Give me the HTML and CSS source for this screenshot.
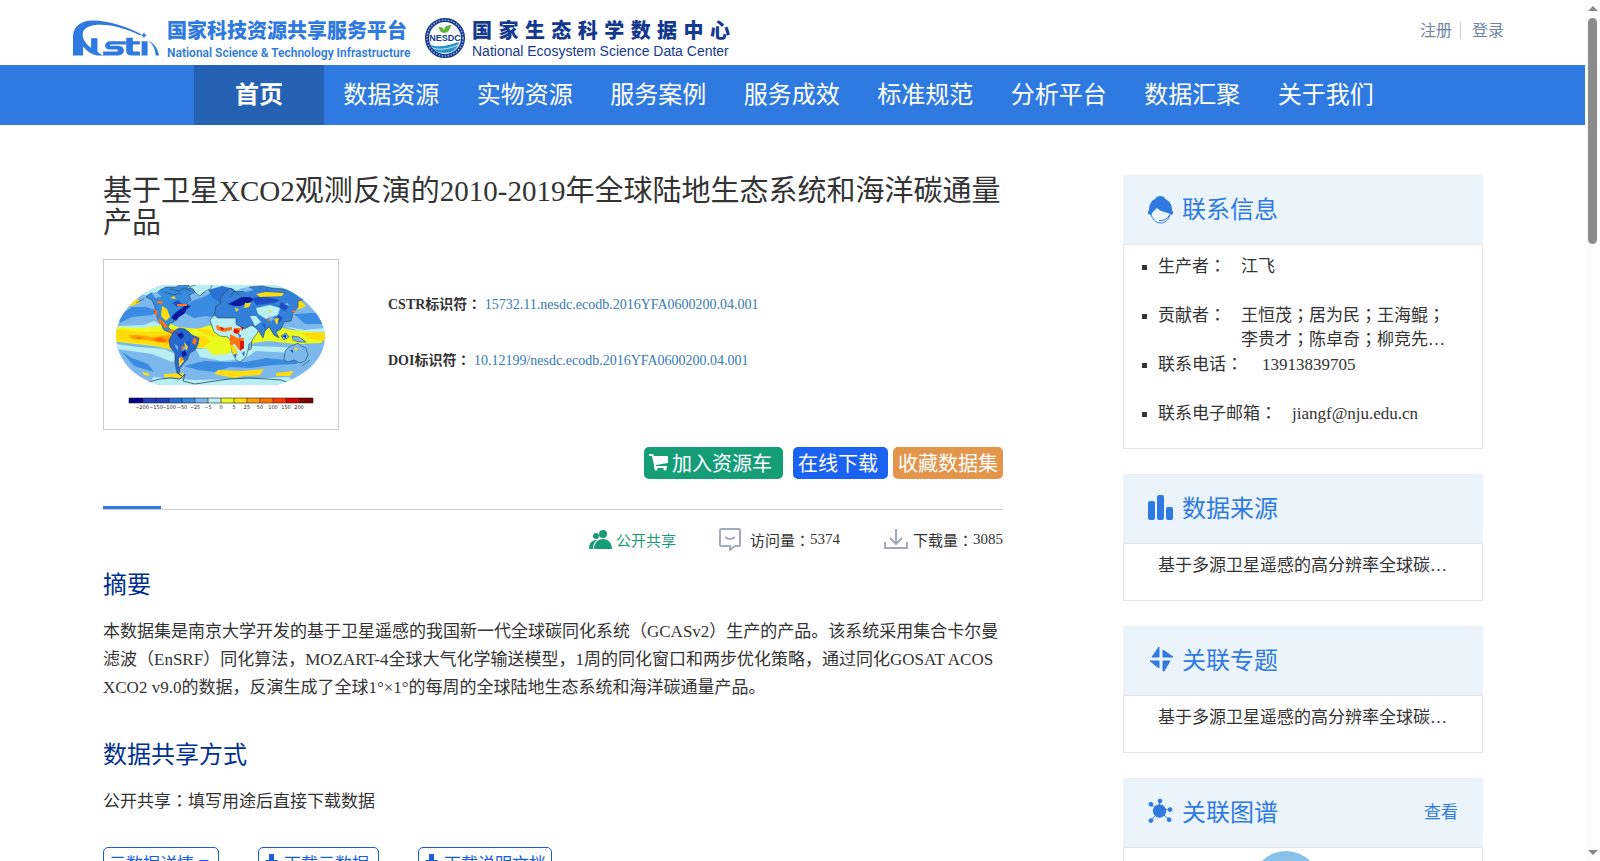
FILE: index.html
```html
<!DOCTYPE html>
<html lang="zh-CN">
<head>
<meta charset="utf-8">
<title>国家生态科学数据中心</title>
<link rel="stylesheet" href="styles.css">
</head>
<body>
<div class="page">
  <header class="top">
    <a class="brand" href="#">
      <svg class="brand-nsti" viewBox="38 60 257 105" aria-hidden="true">
        <g fill="#2f7ae0">
          <path d="M38 165V105C40 76 65 60 95 60C150 60 200 80 242 101L238 104C195 84 150 70 110 73C80 75 66 88 67 104C68 120 80 132 92 142V113H111V152C116 158 122 162 130 165H108C90 160 78 150 68 138V165Z"/>
          <path d="M196 122H150C130 122 128 146 148 147H168C174 147 174 153 168 153H128V165H172C196 165 196 138 174 136H152C146 136 147 132 152 132H196z"/>
          <path d="M197 112H217V122H238V132H217V148C217 153 220 153 224 153H238V165H218C202 165 197 160 197 148z"/>
          <path d="M243 122H261V165H243zM250 95L253 101 259 104 253 107 250 113 247 107 241 104 247 101zM262 118C280 130 292 145 295 165H285C284 145 275 130 262 118z"/>
        </g>
      </svg>
      <span class="brand-text nsti-text"><b>国家科技资源共享服务平台</b><span>National Science &amp; Technology Infrastructure</span></span>
    </a>
    <a class="brand" href="#">
      <svg class="brand-nesdc" viewBox="0 0 40 40" aria-hidden="true">
        <circle cx="20" cy="20" r="18" fill="#fff" stroke="#13398f" stroke-width="4"/>
        <circle cx="20" cy="20" r="18" fill="none" stroke="#9fb4dc" stroke-width="1.5" stroke-dasharray="1.5 1.5"/>
        <path fill="#5fb53c" d="M19 15c-3 0-5-3-5-6 3 0 5 1 5 4 0-4 3-6 7-6-1 5-3 8-7 8z"/>
        <path fill="#2795c9" d="M6 27c8 3 18 0 28-3-1 6-6 11-14 11-7 0-12-3-14-8z"/>
        <path fill="none" stroke="#cfe9f5" d="M8 30c8 3 18 0 25-3"/>
        <text x="20" y="23" text-anchor="middle" class="seal-text">NESDC</text>
      </svg>
      <span class="brand-text nesdc-text"><b><i>国</i><i>家</i><i>生</i><i>态</i><i>科</i><i>学</i><i>数</i><i>据</i><i>中</i><i>心</i></b><span>National Ecosystem Science Data Center</span></span>
    </a>
    <div class="account"><a href="#">注册</a><a href="#">登录</a></div>
  </header>
  <nav class="nav">
    <div class="nav-list"><a class="active" href="#">首页</a><a href="#">数据资源</a><a href="#">实物资源</a><a href="#">服务案例</a><a href="#">服务成效</a><a href="#">标准规范</a><a href="#">分析平台</a><a href="#">数据汇聚</a><a href="#">关于我们</a></div>
  </nav>
  <div class="content">
    <main class="main">
      <h1>基于卫星XCO2观测反演的2010-2019年全球陆地生态系统和海洋碳通量产品</h1>
      <div class="summary">
        <div class="thumb">
          <svg viewBox="0 0 234 169" role="img" aria-label="全球碳通量分布图">
            <defs><clipPath id="globe"><path d="M60 25H170C195 31 221 55 221 77S200 118 172 125H56C28 118 12 98 12 76S35 31 60 25z"/></clipPath></defs>
            <g clip-path="url(#globe)">
              <rect width="234" height="169" fill="#7db8ec"/>
              <path fill="#b8eff2" d="M30 25H200V30H150L120 36 90 29 40 35zM50 117l40 3 55-1 40-2 10 10H40zM12 66l28-1 10-4 8 5v6l-46-1zM12 84l22 3 26 2 18 8-10 5-20-8-36-5zM180 66l20 4 22-2v4h-24zM150 86l30 1 12 2-4 4-36-2-12 8-22 2-22-4-4-8z"/>
              <path fill="#398ce2" d="M14 57l14-10 14 0 12 4-6 4-20 2-12 6zM78 52l8-10 16-6 12-8 14 0-4 16-4 8-8 6-10-2-12 2zM190 54l35-2 2 12h-26zM80 106l20-5 22 1 20 0 20-4 20 2 18-4-8 8-22 1-24 3-20-1-16 5-16-2zM18 92l10 6 16 6 6 8-20-6z"/>
              <path fill="#2b72d4" d="M104 30l14-4 12 3-2 14-12 0-8-6z"/>
              <path fill="#e9fb1e" d="M12 67l24 1 20-2 0-8 6 4 12 5 10 1 10 1 12-4 6 5 16 3 14 2 8-12 14-4 10 8 14 3 30 3v10l-26 1-28-3-14 2-8 6-8 0-6 1-4 4-16 1-4-6-20-3-18 3-16-3-46-5z"/>
              <path fill="#ffdc0a" d="M12 69l30 3 24-1 12 0 4 5 20 0 4 6-8 6-24-2-6 4-18-5-38-4zM90 68l14 1 10 8-12-2zM138 74l6-10 6-5 4 6-6 9-6 8zM198 73l24-1v9l-16-2zM114 110l24 1 22-2-4 6-16 1-10 2-20-4zM60 114l20-1-2 5-18-1zM38 112l6 1 2 3-6-1zM188 42l8-2 6 6-6 3-4 0zM20 43l14-4 2 4-12 4zM172 113l18-2-4 5-14 0z"/>
              <path fill="#ffa300" d="M24 75l12 0 12 2 18-2 6 4-4 5-14-2-12-2-14-1z"/><path fill="#ff6f00" d="M49 79l8-2 6 3-2 2-8 0zM32 77l6 0-1 2-4 0z"/>
              <g stroke="#26465e" stroke-width=".6">
                <path fill="#358bdd" d="M42 37l5-4 5 1 4-4 6-3 10 0 5-3 8 1-2 4 5-1 3 4-6 3 2 5-4 3 2 4-8 4-3 3-4 4 0 4-4 1-2 4 3 3 6 2-1 3 5 2-3 1-7-5-7-3-3-6-3-4-2-7-1-6-3-7z"/>
                <path fill="#b8eff2" d="M85 27l10-3h14l-3 5-6 3-4 4-4-3-3-4z"/>
                <path fill="#2768cf" d="M70 71l5-3 6 1 4 3 3 3 7 3-1 6-3 6-5 3-3 7-4 4-3 4-1 6 3 2-5-3-2-10 0-10-5-6-1-7z"/>
                <path fill="#b8eff2" d="M106 60l6-7 6-2 10 1 8 3 8 2 3 8 5 2 6-2-6 10-4 5-1 7-3 3-2 7-6 5-4-2-4-8 0-9-4-6-8-1-6-4z"/>
                <path fill="#347fd8" d="M111 51l1-5 5-3-1-4 4-6 6-5 5 3 7 0 8-4 12-1 10 2 12 1 14 4 8 6-8 2 0 6-5 6-2 8-7 1-3 7-5 3 3 6-5-3-5-8-4 4-2 7-5-8-6-5-8 4-8-5 0-6-10 0-8 0-4-3z"/>
                <path fill="#7db8ec" d="M181 91l4-4 5-2 4-2 3 3 5 2 2 7-3 6-5 2-6-3-6 2-4-2zM177 76l5-3 3 4-5 3zM188 76l7 1 7 5-7 0-6-2zM145 84l3-2-1 7-3 1zM198 106l8-6"/>
                <path fill="none" d="M66 29l9 2 5-3 6 3M60 32l10 3 7-2M126 37l4-6 5 4M161 30l6 3 14 0M192 34l14 4M32 43l8-4"/>
              </g>
              <path fill="#0b1d9c" d="M67 58l3-4 5-4 7-5 5 1-4 3-3 5-5 3-3 4zM124 44l6-3 8-4 8 0 4 3-6 3-8 3-6 0zM73 75l5-3 2 4-3 3zM77 93l4-3 2 5-4 2zM178 76l4-1 0 3z"/>
              <path fill="#1d4fc4" d="M68 43l6-3 4 4-5 3zM148 38l12-2 16 4-6 3-18 2zM177 42l8 4-4 5-6-4zM158 63l3 1 1 6zM173 54l6 4-4 5zM83 80l4 2-3 4zM186 90l3 0 0 3z"/>
              <path fill="#b8eff2" d="M152 48l14-3 10 3-2 7-12 4-8-5zM146 56l6 0 5 6-6 4z"/>
              <path fill="#7db8ec" d="M48 33l5-1 5 5-7 1zM134 29l10-2 6 3-8 2zM70 84l4 2 0 5zM80 86l2 3-4 2zM164 56l6 2-3 4zM180 44l4-1 1 3z"/>
              <path fill="#276ed4" d="M126 79l4-2 2 5-4 2zM129 90l4 2-1 6-3-4zM134 74l3 1-1 4zM138 93l3-2-1 6z"/>
              <path fill="#ffdc0a" d="M58 46l5 3 3 8-4 4-5-5zM66 38l4-2 2 3zM152 34l10-2 18 1-2 3-22 1zM141 43l6 0-2 4-5 1zM127 84l4 3 3 6-5 2zM80 82l4 5-2 4zM75 98l3-1 2 4-5 6zM170 59l5-1-2 7zM165 50l3 1-3 2zM131 48l4 1-3 3zM190 88l4 0-2 3z"/>
              <path fill="#ff7214" d="M50 49l3 2 0 6-3-4zM53 41l6 0-1 3-5-1zM73 44h10v2H73zM54 58l6 4 4 5-3 1-6-6zM112 65l8 3 8-1 0 3-8 2-7-2zM130 68l7 0-2 6-6-2zM126 74l8 4 6 0-1 10-4 2-4-6-5 1zM90 77l3 3-2 5-3-2zM78 85l2 3-3 2zM63 70l8 0-3 3zM77 97l2 2-3 3zM163 58l3 2-2 2zM187 51l4-1 0 3z"/>
              <path fill="#de1200" d="M116 67l4 1-2 3zM130 69l5 1-1 4-4-1zM137 67l3 0-2 4zM136 81l4 0 0 7-4 3zM72 73l2 0-1 2zM50 51l1 0 0 3z"/>
              <path d="M44 122l12-3 10-1 10 1 5-5-2 7 12 3 20-3 14-2 20-1 18 1 14 1 8 3" fill="none" stroke="#26465e" stroke-width=".8"/>
            </g>
            <g>
              <path fill="#00008f" d="M25 138h14v5H25z"/><path fill="#203ebd" d="M39 138h26v5H39z"/><path fill="#246fdb" d="M65 138h13v5H65z"/><path fill="#398ce2" d="M78 138h13v5H78z"/><path fill="#7db8ec" d="M91 138h13v5H91z"/><path fill="#b8eff2" d="M104 138h13v5h-13z"/><path fill="#e9fb1e" d="M117 138h13v5h-13z"/><path fill="#ffdc0a" d="M130 138h13v5h-13z"/><path fill="#ffa300" d="M143 138h13v5h-13z"/><path fill="#ff7700" d="M156 138h13v5h-13z"/><path fill="#ff3c00" d="M169 138h13v5h-13z"/><path fill="#d80000" d="M182 138h13v5h-13z"/><path fill="#7b0000" d="M195 138h14v5h-14z"/>
              <path fill="none" stroke="#222" stroke-width=".6" d="M25 138h184v5H25zM39 138v5m13-5v5m13-5v5m13-5v5m13-5v5m13-5v5m13-5v5m13-5v5m13-5v5m13-5v5m13-5v5m13-5v5m13-5v5"/>
              <g class="scale-text"><text x="38" y="149">−200</text><text x="52" y="149">−150</text><text x="65" y="149">−100</text><text x="78" y="149">−50</text><text x="91" y="149">−25</text><text x="104" y="149">−5</text><text x="117" y="149">0</text><text x="130" y="149">5</text><text x="143" y="149">25</text><text x="156" y="149">50</text><text x="169" y="149">100</text><text x="182" y="149">150</text><text x="195" y="149">200</text></g>
            </g>
          </svg>
        </div>
        <div class="ids">
          <p><b>CSTR标识符<span lang="zh-TW">：</span></b> <a href="#">15732.11.nesdc.ecodb.2016YFA0600200.04.001</a></p>
          <p><b>DOI标识符<span lang="zh-TW">：</span></b> <a href="#">10.12199/nesdc.ecodb.2016YFA0600200.04.001</a></p>
        </div>
      </div>
      <div class="actions">
        <button class="cart"><svg width="20" height="18" viewBox="0 0 20 18" aria-hidden="true"><path fill="#fff" d="M0 1h4l1 2h14v7L7 12v1h11v2H5V12L3 3H0z"/><circle cx="7" cy="16" r="1.6" fill="#fff"/><circle cx="16" cy="16" r="1.6" fill="#fff"/></svg>加入资源车</button>
        <button class="download">在线下载</button>
        <button class="favorite">收藏数据集</button>
      </div>
      <div class="rule"></div>
      <div class="stats">
        <span class="share"><svg width="24" height="19" viewBox="0 0 24 19" fill="#159d78" aria-hidden="true"><circle cx="14" cy="4" r="4"/><circle cx="7" cy="6" r="3"/><path d="M5 19c0-6 4-10 9-10s9 4 9 10zM0 19c0-5 2-8 6-9h2c-3 2-4 5-4 9z"/></svg>公开共享</span>
        <span class="visits"><svg width="23" height="23" viewBox="0 0 23 23" fill="none" stroke="#a0abbc" stroke-width="2" aria-hidden="true"><path d="M2 1h18q1 0 1 1v15q0 1-1 1h-4l-5 4v-4H2q-1 0-1-1V2q0-1 1-1zM6 9q5 4 10 0"/></svg>访问量<span lang="zh-TW">：</span>5374</span>
        <span class="downloads"><svg width="24" height="20" viewBox="0 0 24 20" fill="none" stroke="#a0abbc" stroke-width="2" aria-hidden="true"><path d="M12 0v14M6 9l6 6 6-6M1 13v6h22v-6"/></svg>下载量<span lang="zh-TW">：</span>3085</span>
      </div>
      <h2>摘要</h2>
      <p class="text">本数据集是南京大学开发的基于卫星遥感的我国新一代全球碳同化系统（GCASv2）生产的产品。该系统采用集合卡尔曼滤波（EnSRF）同化算法，MOZART-4全球大气化学输送模型，1周的同化窗口和两步优化策略，通过同化GOSAT ACOS XCO2 v9.0的数据，反演生成了全球1°×1°的每周的全球陆地生态系统和海洋碳通量产品。</p>
      <h2>数据共享方式</h2>
      <p class="text">公开共享<span lang="zh-TW">：</span>填写用途后直接下载数据</p>
      <div class="files">
        <button class="wide-end">元数据详情<svg width="10" height="5" viewBox="0 0 10 5" aria-hidden="true"><path fill="#1b5cd8" d="M0 0h10L5 5z"/></svg></button>
        <button class="wide-end"><svg width="15" height="16" viewBox="0 0 15 16" aria-hidden="true"><path fill="#1b5cd8" d="M5 0h5v6h4l-6.500 7L1 6h4zM0 14h15v2H0z"/></svg>下载元数据</button>
        <button><svg width="15" height="16" viewBox="0 0 15 16" aria-hidden="true"><path fill="#1b5cd8" d="M5 0h5v6h4l-6.500 7L1 6h4zM0 14h15v2H0z"/></svg>下载说明文档</button>
      </div>
    </main>
    <aside class="side">
      <section class="card contact">
        <h3><svg width="25" height="28" viewBox="0 0 25 28" aria-hidden="true"><path fill="#2f7ae0" d="M12 0C15 0 17 1 17 3C22 5 24 9 24 14L25 16V18L23 19C22 16 13 17 9 12C7 14 4 16 3 19L0 18V16L1 14C1 9 3 5 7 3C8 1 10 0 12 0z"/><path fill="none" stroke="#2f7ae0" d="M3 18C4 23 8 27 12.500 27S21 24 22 18M11 24.500q7 1 11-6"/></svg>联系信息</h3>
        <ul>
          <li><span>生产者<span lang="zh-TW">：</span></span><span class="value">江飞</span></li>
          <li><span>贡献者<span lang="zh-TW">：</span></span><span class="value clamp">王恒茂<span lang="zh-TW">；</span>居为民<span lang="zh-TW">；</span>王海鲲<span lang="zh-TW">；</span>李贵才<span lang="zh-TW">；</span>陈卓奇<span lang="zh-TW">；</span>柳竞先<span lang="zh-TW">；</span>何维</span></li>
          <li><span>联系电话<span lang="zh-TW">：</span></span><span class="value phone">13913839705</span></li>
          <li><span>联系电子邮箱<span lang="zh-TW">：</span></span><span class="value">jiangf@nju.edu.cn</span></li>
        </ul>
      </section>
      <section class="card">
        <h3><svg width="25" height="25" viewBox="0 0 25 25" fill="#2f7ae0" aria-hidden="true"><rect y="6" width="7" height="19" rx="2"/><rect x="9" width="7" height="25" rx="2"/><rect x="18" y="12" width="7" height="13" rx="2"/></svg>数据来源</h3>
        <p>基于多源卫星遥感的高分辨率全球碳同化系统研究</p>
      </section>
      <section class="card">
        <h3><svg width="25" height="26" viewBox="0 0 25 26" fill="#2f7ae0" stroke="#2f7ae0" stroke-linejoin="round" aria-hidden="true"><path d="M11 1V11H4zM15 4L25 11H15zM2 15H11V22zM15 15H22L16 25H15z"/></svg>关联专题</h3>
        <p>基于多源卫星遥感的高分辨率全球碳同化系统研究</p>
      </section>
      <section class="card">
        <h3><svg width="25" height="26" viewBox="0 0 26 26" fill="#2f7ae0" stroke="#2f7ae0" aria-hidden="true"><path d="M12 13V2M12 13L3 6M12 13l11-2M12 13L3 23M12 13l10 9"/><circle cx="12" cy="13" r="6.500"/><circle cx="12.500" cy="2.500" r="2"/><circle cx="3" cy="6" r="2"/><circle cx="23" cy="11.500" r="2"/><circle cx="3" cy="23" r="2"/><circle cx="22" cy="22" r="2"/></svg>关联图谱<a href="#">查看</a></h3>
        <div class="graph"><svg width="70" height="70" viewBox="0 0 70 70" aria-hidden="true"><circle cx="35" cy="35" r="34" fill="#87c0e9"/></svg></div>
      </section>
    </aside>
  </div>
</div>
<div class="scrollbar" aria-hidden="true"><i class="up"></i><i class="thumb-bar"></i><i class="down"></i></div>
</body>
</html>
```
FILE: styles.css
```css
* { box-sizing: border-box; }
body { margin: 0; height: 100vh; display: flex; overflow: hidden; font-family: "Liberation Serif", "Noto Sans CJK SC", serif; font-size: 17px; color: #333; background: #fff; }
[lang="zh-TW"] { font-family: "Liberation Serif", "Noto Sans CJK TC", serif; }
a { color: inherit; text-decoration: none; }
h1, h2, h3, p, ul { margin: 0; padding: 0; font-weight: normal; }
button { font-family: inherit; cursor: pointer; }
svg { display: block; flex: none; }
.page { flex: 1; min-width: 0; }

.top { display: flex; height: 65px; padding: 17px 81px 0 73px; }
.brand { display: flex; }
.brand + .brand { margin-left: 12px; }
.brand-nsti { width: 86px; height: 36px; margin-top: 3px; }
.brand-nesdc { width: 40px; height: 40px; margin-top: 1px; }
.brand-text { display: flex; flex-direction: column; white-space: nowrap; }
.brand-text b { font-family: "Noto Sans CJK SC", sans-serif; font-weight: 900; font-size: 20px; line-height: 26px; }
.nsti-text { color: #2f7ae0; margin-left: 8px; width: 246px; }
.nsti-text span { font: 600 12px/20px Roboto, sans-serif; }
.nesdc-text { color: #13398f; margin-left: 7px; width: 258px; }
.nesdc-text b { display: flex; justify-content: space-between; }
.nesdc-text i { font-style: normal; }
.nesdc-text span { font: 14px/16px "Liberation Sans", sans-serif; }
.seal-text { font: bold 9px "Liberation Sans", sans-serif; fill: #13398f; }
.account { margin-left: auto; display: flex; align-self: flex-start; margin-top: 5px; font-size: 16px; line-height: 17px; color: #6f86a6; }
.account a + a { margin-left: 8px; padding-left: 11px; border-left: 1px solid #c5cedb; }

.nav { background: #2f7ae0; padding-left: 194px; font-size: 24px; line-height: 60px; color: #fff; }
.nav-list { display: grid; grid-template-columns: 130px repeat(8, 1fr); column-gap: 1px; width: 1198px; }
.nav a { text-align: center; }
.nav .active { background: #2662b3; font-weight: bold; }

.content { display: flex; justify-content: space-between; padding: 50px 102px 0 103px; }
.main { width: 900px; }
h1 { font-size: 29px; line-height: 32px; }
.summary { display: flex; margin-top: 20px; }
.thumb { width: 236px; border: 1px solid #ccc; }
.scale-text { font: 5px "DejaVu Sans", sans-serif; text-anchor: middle; fill: #222; }
.ids { margin-left: 49px; padding-top: 36px; font-size: 14px; line-height: 20px; }
.ids p + p { margin-top: 36px; }
.ids a { color: #337ab7; }
.actions { display: flex; justify-content: flex-end; margin-top: 17px; }
.actions button { display: flex; align-items: center; height: 32px; border: 0; border-radius: 5px; color: #fff; font-size: 20px; padding: 0 5px 2px; }
.actions svg { margin-right: 3px; }
.actions .cart { background: #159d78; padding-right: 11px; }
.actions .download { background: #1a62f2; margin-left: 10px; padding-right: 10px; }
.actions .favorite { background: #e3954b; margin-left: 5px; }
.rule { border-bottom: 1px solid #ccc; margin-top: 27px; height: 4px; }
.rule::before { content: ""; display: block; width: 58px; height: 3px; background: #2f7ae0; }
.stats { display: flex; justify-content: flex-end; align-items: center; height: 60px; padding-bottom: 2px; font-size: 15px; }
.stats span { display: flex; align-items: center; }
.share { color: #159d78; }
.share svg { margin-right: 3px; }
.visits { margin-left: 43px; }
.visits svg { margin-right: 8px; }
.downloads { margin-left: 44px; }
.downloads svg { margin-right: 5px; }
h2 { font-size: 24px; line-height: 30px; color: #00308f; }
.text { margin-top: 18px; line-height: 28px; }
.text + h2 { margin-top: 38px; }
.files { display: flex; margin-top: 31px; gap: 39px; }
.files button { display: flex; align-items: center; height: 32px; background: #fff; border: 1px solid #1b5cd8; border-radius: 5px; color: #1b5cd8; font-size: 17px; padding: 0 5px 2px; gap: 5px; }
.files .wide-end { padding-right: 9px; }

.side { width: 360px; }
.card { margin-bottom: 25px; border: 1px solid #e4e5e7; border-top: 0; }
.card h3 { display: flex; align-items: center; height: 70px; margin: 0 -1px; padding: 0 25px 5px; background: #ecf4fb; border-bottom: 1px solid #e4e5e7; color: #2f7ae0; font-size: 24px; }
.card h3 svg { margin: 2px 9px 0 0; }
.contact h3 svg { margin-top: 6px; }
.card h3 a { margin-left: auto; font-size: 17px; }
.card p { height: 56px; padding: 10px 34px 0; line-height: 24px; white-space: nowrap; overflow: hidden; text-overflow: ellipsis; }
.card ul { list-style: none; padding: 10px 34px 0; height: 203px; }
.card li { display: flex; height: 49px; line-height: 24px; white-space: nowrap; }
.card li::before { content: ""; width: 5px; height: 5px; background: #333; margin: 10px 11px 0 -16px; }
.value { margin-left: 15px; }
.phone { margin-left: 19px; }
.clamp { width: 206px; white-space: normal; display: -webkit-box; -webkit-box-orient: vertical; -webkit-line-clamp: 2; overflow: hidden; }
.graph { height: 72px; padding: 2px 0 0 127px; }

.scrollbar { width: 15px; flex: none; display: flex; flex-direction: column; align-items: center; background: #fcfcfc; padding: 6px 0; }
.scrollbar i { display: block; }
.up { border: 5px solid transparent; border-top: 0; border-bottom-color: #888; }
.thumb-bar { width: 9px; height: 226px; margin-top: 7px; border-radius: 5px; background: #8b8b8b; }
.down { border: 5px solid transparent; border-bottom: 0; border-top-color: #888; margin-top: auto; }
```
